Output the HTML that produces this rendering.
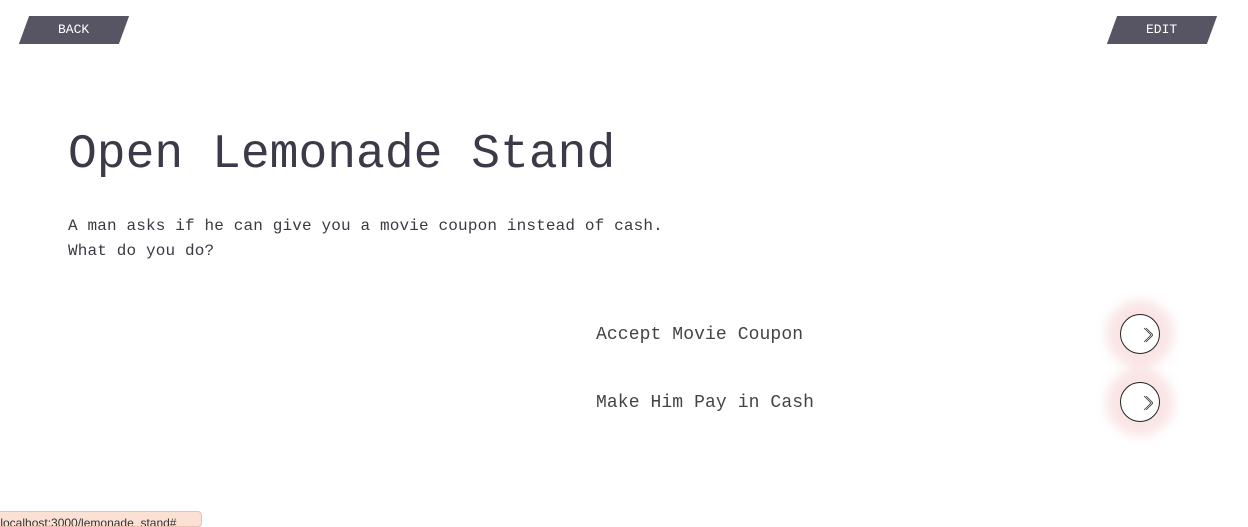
<!DOCTYPE html>
<html><head><style>
body{margin:0;width:1248px;height:520px;background:#fff;position:relative;overflow:hidden;font-family:"Liberation Mono",monospace;color:#3a3a44}
.btn{position:absolute;top:16px;width:100px;height:28px;background:#575463;transform:skewX(-20deg);color:#fff;font-family:"Liberation Mono",monospace;font-size:13px;line-height:28px;text-align:center}
.btn span{display:inline-block;transform:skewX(20deg)}
h1{position:absolute;left:68px;top:129px;margin:0;font-weight:normal;font-size:48px;line-height:52px;color:#3a3a48}
p{position:absolute;left:68px;top:214px;margin:0;font-size:16px;line-height:25px;letter-spacing:0.15px;color:#3a3a44}
.opt{position:absolute;left:596px;font-size:18px;color:#444;letter-spacing:0.1px}
.c{position:absolute;left:1120px;width:38px;height:38px;border:1px solid #222;border-radius:50%;background:#fff;box-shadow:0 0 10px 14px rgba(240,170,170,0.3)}
.c svg{position:absolute;left:22px;top:12px}
.status{position:absolute;left:-4px;top:511px;width:204px;height:14px;background:#fbe0d4;border:1px solid #e8c0b0;border-radius:4px;font-family:"Liberation Sans",sans-serif;font-size:12px;color:#333;line-height:22px;white-space:nowrap;overflow:hidden}
</style></head><body>
<div class="btn" style="left:24px"><span>BACK</span></div>
<div class="btn" style="left:1112px"><span>EDIT</span></div>
<h1>Open Lemonade Stand</h1>
<p>A man asks if he can give you a movie coupon instead of cash.<br>What do you do?</p>
<div class="opt" style="top:325px">Accept Movie Coupon</div>
<div class="opt" style="top:393px">Make Him Pay in Cash</div>
<div class="c" style="top:314px"><svg width="10" height="16" viewBox="0 0 10 16"><path d="M1 1L8 8L1 15M3 1L10 8L3 15" fill="none" stroke="#333" stroke-width="0.8"/></svg></div>
<div class="c" style="top:382px"><svg width="10" height="16" viewBox="0 0 10 16"><path d="M1 1L8 8L1 15M3 1L10 8L3 15" fill="none" stroke="#333" stroke-width="0.8"/></svg></div>
<div class="status">&nbsp;localhost:3000/lemonade_stand#</div>
</body></html>
